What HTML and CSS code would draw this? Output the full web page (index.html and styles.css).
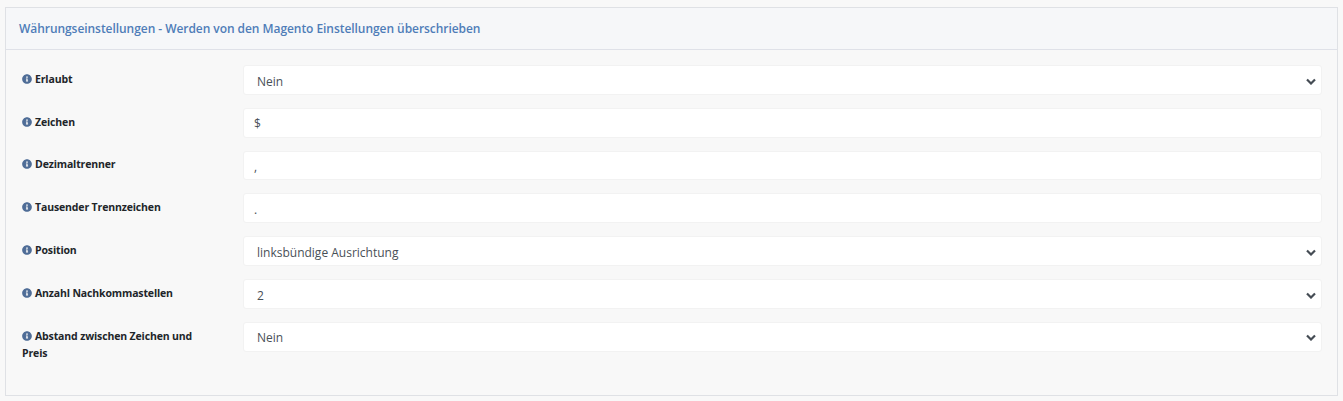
FILE: index.html
```html
<!DOCTYPE html>
<html lang="de">
<head>
<meta charset="utf-8">
<title>Währungseinstellungen</title>
<link rel="stylesheet" href="styles.css">
</head>
<body>
<section class="card">
  <header class="card-header">Währungseinstellungen - Werden von den Magento Einstellungen überschrieben</header>
  <div class="card-body">
    <div class="row">
      <div class="label"><svg class="info" viewBox="0 0 512 512"><path d="M256 8C119 8 8 119 8 256s111 248 248 248 248-111 248-248S393 8 256 8zm0 110a42 42 0 1 1 0 84 42 42 0 0 1 0-84zm56 254c0 7-5 12-12 12h-88c-7 0-12-5-12-12v-24c0-7 5-12 12-12h12v-64h-12c-7 0-12-5-12-12v-24c0-7 5-12 12-12h64c7 0 12 5 12 12v100h12c7 0 12 5 12 12v24z"/></svg>Erlaubt</div>
      <div class="control select">Nein<svg class="chev" viewBox="0 0 10 7"><path d="M1 1.5l4 4 4-4"/></svg></div>
    </div>
    <div class="row">
      <div class="label"><svg class="info" viewBox="0 0 512 512"><path d="M256 8C119 8 8 119 8 256s111 248 248 248 248-111 248-248S393 8 256 8zm0 110a42 42 0 1 1 0 84 42 42 0 0 1 0-84zm56 254c0 7-5 12-12 12h-88c-7 0-12-5-12-12v-24c0-7 5-12 12-12h12v-64h-12c-7 0-12-5-12-12v-24c0-7 5-12 12-12h64c7 0 12 5 12 12v100h12c7 0 12 5 12 12v24z"/></svg>Zeichen</div>
      <div class="control">$</div>
    </div>
    <div class="row">
      <div class="label"><svg class="info" viewBox="0 0 512 512"><path d="M256 8C119 8 8 119 8 256s111 248 248 248 248-111 248-248S393 8 256 8zm0 110a42 42 0 1 1 0 84 42 42 0 0 1 0-84zm56 254c0 7-5 12-12 12h-88c-7 0-12-5-12-12v-24c0-7 5-12 12-12h12v-64h-12c-7 0-12-5-12-12v-24c0-7 5-12 12-12h64c7 0 12 5 12 12v100h12c7 0 12 5 12 12v24z"/></svg>Dezimaltrenner</div>
      <div class="control">,</div>
    </div>
    <div class="row">
      <div class="label"><svg class="info" viewBox="0 0 512 512"><path d="M256 8C119 8 8 119 8 256s111 248 248 248 248-111 248-248S393 8 256 8zm0 110a42 42 0 1 1 0 84 42 42 0 0 1 0-84zm56 254c0 7-5 12-12 12h-88c-7 0-12-5-12-12v-24c0-7 5-12 12-12h12v-64h-12c-7 0-12-5-12-12v-24c0-7 5-12 12-12h64c7 0 12 5 12 12v100h12c7 0 12 5 12 12v24z"/></svg>Tausender Trennzeichen</div>
      <div class="control">.</div>
    </div>
    <div class="row">
      <div class="label"><svg class="info" viewBox="0 0 512 512"><path d="M256 8C119 8 8 119 8 256s111 248 248 248 248-111 248-248S393 8 256 8zm0 110a42 42 0 1 1 0 84 42 42 0 0 1 0-84zm56 254c0 7-5 12-12 12h-88c-7 0-12-5-12-12v-24c0-7 5-12 12-12h12v-64h-12c-7 0-12-5-12-12v-24c0-7 5-12 12-12h64c7 0 12 5 12 12v100h12c7 0 12 5 12 12v24z"/></svg>Position</div>
      <div class="control select">linksbündige Ausrichtung<svg class="chev" viewBox="0 0 10 7"><path d="M1 1.5l4 4 4-4"/></svg></div>
    </div>
    <div class="row">
      <div class="label"><svg class="info" viewBox="0 0 512 512"><path d="M256 8C119 8 8 119 8 256s111 248 248 248 248-111 248-248S393 8 256 8zm0 110a42 42 0 1 1 0 84 42 42 0 0 1 0-84zm56 254c0 7-5 12-12 12h-88c-7 0-12-5-12-12v-24c0-7 5-12 12-12h12v-64h-12c-7 0-12-5-12-12v-24c0-7 5-12 12-12h64c7 0 12 5 12 12v100h12c7 0 12 5 12 12v24z"/></svg>Anzahl Nachkommastellen</div>
      <div class="control select">2<svg class="chev" viewBox="0 0 10 7"><path d="M1 1.5l4 4 4-4"/></svg></div>
    </div>
    <div class="row">
      <div class="label"><svg class="info" viewBox="0 0 512 512"><path d="M256 8C119 8 8 119 8 256s111 248 248 248 248-111 248-248S393 8 256 8zm0 110a42 42 0 1 1 0 84 42 42 0 0 1 0-84zm56 254c0 7-5 12-12 12h-88c-7 0-12-5-12-12v-24c0-7 5-12 12-12h12v-64h-12c-7 0-12-5-12-12v-24c0-7 5-12 12-12h64c7 0 12 5 12 12v100h12c7 0 12 5 12 12v24z"/></svg>Abstand zwischen Zeichen und Preis</div>
      <div class="control select">Nein<svg class="chev" viewBox="0 0 10 7"><path d="M1 1.5l4 4 4-4"/></svg></div>
    </div>
  </div>
</section>
</body>
</html>
```
FILE: styles.css
```css
html, body { margin: 0; height: 401px; overflow: hidden; }
body {
  background: #f8f8f8;
  padding: 7px 5px 0;
  box-sizing: border-box;
  font-family: "Open Sans", "Noto Sans", sans-serif;
  color: #495057;
}
.card {
  height: 389px;
  box-sizing: border-box;
  border: 1px solid #dfe1e5;
  background: #f8f8f8;
}
.card-header {
  height: 42px;
  box-sizing: border-box;
  border-bottom: 1px solid #dfe1e8;
  background: #f6f7f9;
  padding: 0 13px;
  display: flex;
  align-items: center;
  font-size: 12px;
  font-weight: 600;
  letter-spacing: -0.055px;
  color: #4f7db8;
}
.card-body {
  padding: 15px 15px 0 16px;
  display: flex;
  flex-direction: column;
  gap: 13px;
}
.row {
  display: flex;
  align-items: flex-start;
}
.label {
  width: 183px;
  margin-right: 38px;
  flex: none;
  font-size: 10.5px;
  font-weight: 700;
  letter-spacing: -0.14px;
  line-height: 17px;
  color: #212529;
  padding-top: 5.8px;
}
.info {
  width: 10px;
  height: 10px;
  fill: #4f6d97;
  margin-right: 3px;
  vertical-align: -1px;
}
.control {
  flex: 1;
  height: 29.8px;
  box-sizing: border-box;
  background: #fff;
  border: 1px solid #f2f2f2;
  border-radius: 3px;
  padding: 2.6px 10px 0;
  font-size: 12px;
  display: flex;
  align-items: center;
  justify-content: space-between;
}
.select { padding-left: 13px; }
.chev {
  width: 10px;
  height: 7px;
  fill: none;
  stroke: #454c54;
  stroke-width: 2.2;
  margin-right: -5px;
}
```
